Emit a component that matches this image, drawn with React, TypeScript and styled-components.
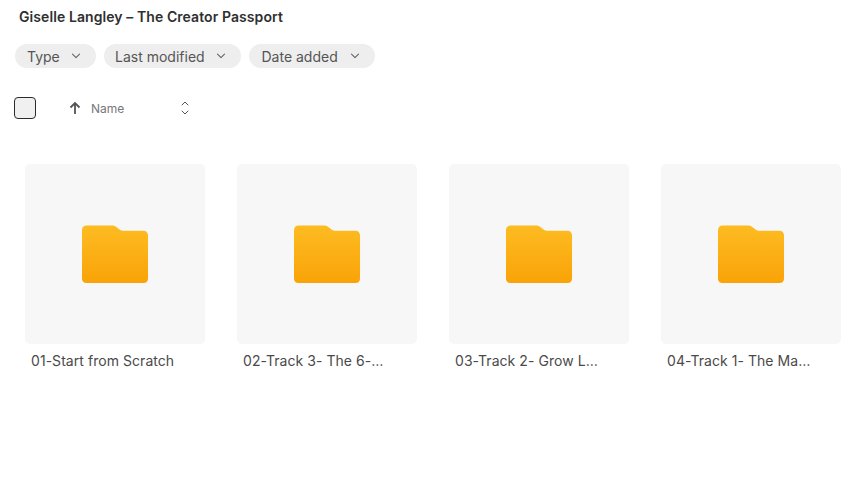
import React from "react";
import styled, { createGlobalStyle } from "styled-components";

const Global = createGlobalStyle`
  html, body { margin: 0; padding: 0; background: #fff; }
  body { font-family: Inter, "Liberation Sans", sans-serif; width: 863px; height: 497px; overflow: hidden; }
`;

const Page = styled.div`
  display: flex;
  flex-direction: column;
  padding: 8px 0 0 14px;
`;

const Title = styled.h1`
  margin: 0 0 0 5px;
  font-size: 14px;
  line-height: 17px;
  font-weight: 600;
  letter-spacing: 0.08px;
  color: #2f2f2f;
`;

const Filters = styled.div`
  display: flex;
  gap: 8px;
  margin: 19px 0 0 1px;
`;

const Chip = styled.button<{ $w: number; $pad: number }>`
  display: flex;
  align-items: center;
  justify-content: space-between;
  width: ${(p) => p.$w}px;
  height: 24px;
  padding: 0 15px 0 ${(p) => p.$pad}px;
  border: 0;
  border-radius: 12px;
  background: #eeeeee;
  color: #555;
  font: 400 14px Inter, "Liberation Sans", sans-serif;
`;

const SortRow = styled.div`
  display: flex;
  align-items: center;
  margin-top: 28px;
  height: 24px;
`;

const Check = styled.div`
  box-sizing: border-box;
  width: 22px;
  height: 22px;
  border: 1.3px solid #2a2a2a;
  border-radius: 4px;
  background: #f0f0f0;
`;

const UpArrow = styled.svg`
  margin-left: 33px;
`;

const SortName = styled.span`
  margin-left: 10px;
  width: 58px;
  font-size: 12px;
  color: #777;
`;

const ArrowWrap = styled.span`
  display: flex;
  margin-left: 31px;
`;

const Grid = styled.div`
  display: flex;
  gap: 32px;
  margin: 44px 0 0 11px;
`;

const Card = styled.div`
  display: flex;
  flex-direction: column;
  width: 180px;
`;

const Thumb = styled.div`
  display: flex;
  align-items: center;
  justify-content: center;
  height: 180px;
  background: #f7f7f7;
  border-radius: 5px;
`;

const Label = styled.div`
  margin: 7px 0 0 6px;
  font-size: 14px;
  line-height: 19px;
  letter-spacing: 0.05px;
  color: #4a4a4a;
  white-space: nowrap;
`;

const Chevron = () => (
  <svg width="10" height="6" viewBox="0 0 10 6" fill="none" stroke="#666" strokeWidth="1.1" strokeLinecap="round" strokeLinejoin="round">
    <path d="M1.500 1.200L5 4.700l3.500-3.500" />
  </svg>
);

const Folder = ({ id }: { id: string }) => (
  <svg width="67" height="60" viewBox="0.5 0 68 60">
    <defs>
      <linearGradient id={id} x1="0" y1="0" x2="0" y2="1">
        <stop offset="0" stopColor="#fdbc22" />
        <stop offset="1" stopColor="#f9a308" />
      </linearGradient>
    </defs>
    <path
      fill={`url(#${id})`}
      d="M5 1h26c1.600 0 2.800.5 4 1.400L39 5.300c1 .7 1.800 1 3 1h21c2.500 0 4.500 2 4.500 4.500V55c0 2.500-2 4.500-4.500 4.500H5C2.500 59.500 .5 57.500 .5 55V5.500C.5 3 2.500 1 5 1z"
    />
  </svg>
);

const names = ["01-Start from Scratch", "02-Track 3- The 6-…", "03-Track 2- Grow L…", "04-Track 1- The Ma…"];

export default function App() {
  return (
    <Page>
      <Global />
      <Title>Giselle Langley – The Creator Passport</Title>
      <Filters>
        <Chip $w={81} $pad={12}>Type <Chevron /></Chip>
        <Chip $w={137} $pad={11}>Last modified <Chevron /></Chip>
        <Chip $w={126} $pad={12.500}>Date added <Chevron /></Chip>
      </Filters>
      <SortRow>
        <Check />
        <UpArrow width="12" height="14" viewBox="0 0 12 14" fill="none" stroke="#555" strokeWidth="1.8">
          <path d="M6 13V2M1.500 6.500L6 2l4.500 4.500" />
        </UpArrow>
        <SortName>Name</SortName>
        <ArrowWrap>
          <svg width="10" height="16" viewBox="0 0 10 16" fill="none" stroke="#555" strokeWidth="1" strokeLinecap="round" strokeLinejoin="round">
            <path d="M2 5l3-3 3 3M2 11l3 3 3-3" />
          </svg>
        </ArrowWrap>
      </SortRow>
      <Grid>
        {names.map((n, i) => (
          <Card key={n}>
            <Thumb><Folder id={`folder-${i}`} /></Thumb>
            <Label>{n}</Label>
          </Card>
        ))}
      </Grid>
    </Page>
  );
}
